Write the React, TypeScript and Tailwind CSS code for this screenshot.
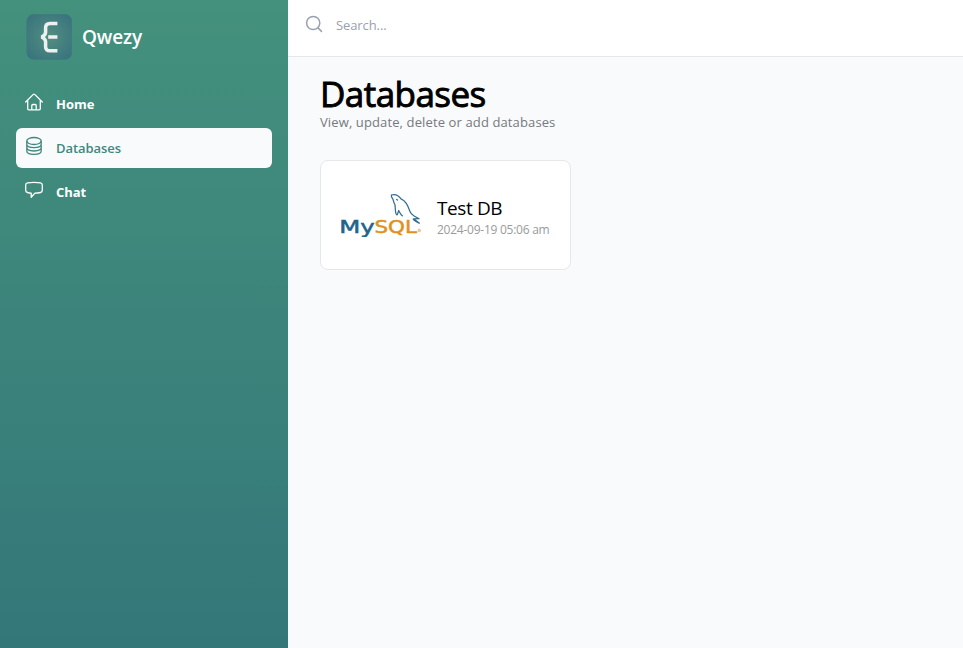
import React from "react";

function Logo() {
  return (
    <svg className="h-[46px] w-[46px] shrink-0" viewBox="0 0 46 46" fill="none">
      <defs>
        <radialGradient id="logo-fill" r=".62">
          <stop offset="0" stopColor="#528f80" />
          <stop offset="1" stopColor="#3a747e" />
        </radialGradient>
      </defs>
      <rect x=".9" y=".5" width="44.8" height="44.8" rx="6.5" fill="url(#logo-fill)" stroke="#3d7d7d" />
      <path d="M31.4 9.4h-7.4q-4.4 0-4.4 4.4v4.4q0 3-4 4.8 4 1.8 4 4.8v4.6q0 4.4 4.4 4.4h7.4M22.2 23h9.2" stroke="#eef0ef" strokeWidth="3.5" strokeLinejoin="bevel" />
    </svg>
  );
}

function HomeIcon() {
  return (
    <svg className="h-5 w-5" viewBox="0 0 20 20" fill="none" stroke="currentColor" strokeWidth="1.3" strokeLinecap="round" strokeLinejoin="round">
      <path d="M1.7 10 9.3 2.4q.7-.7 1.4 0l7.6 7.6M3.7 8.3v8.4q0 1.1 1.1 1.1h10.4q1.1 0 1.1-1.1V8.3M7.8 17.7v-4.2q0-1 1-1h2.4q1 0 1 1v4.2" />
    </svg>
  );
}

function DatabaseIcon() {
  return (
    <svg className="h-5 w-5" viewBox="0 0 20 20" fill="none" stroke="currentColor" strokeWidth="1.3">
      <ellipse cx="10" cy="5" rx="7.2" ry="3.5" />
      <path d="M2.8 5v9.9c0 4.5 14.4 4.5 14.4 0V5M2.8 8.3c0 4.5 14.4 4.5 14.4 0M2.8 11.6c0 4.5 14.4 4.5 14.4 0" />
    </svg>
  );
}

function ChatIcon() {
  return (
    <svg className="h-5 w-5" viewBox="0 0 20 20" fill="none" stroke="currentColor" strokeWidth="1.3" strokeLinejoin="round">
      <path d="M3.5 2.8Q10 1.8 16.5 2.8 18.3 3.2 18.3 5v5.3q0 1.9-1.8 2.2-2.7.5-5.6.6L7.2 17.2v-4.1q-1.9-.1-3.7-.6-1.8-.3-1.8-2.2V5q0-1.8 1.8-2.2Z" />
    </svg>
  );
}

function MySqlLogo() {
  return (
    <svg className="h-[44px] w-[82px] shrink-0" viewBox="0 0 82 44">
      <g fontFamily="DejaVu Sans, sans-serif" fontSize="18.2" strokeWidth=".5">
        <text x="-.8" y="40" textLength="35.5" lengthAdjust="spacingAndGlyphs" fill="#20638b" stroke="#20638b">My</text>
        <text x="34.4" y="40" textLength="42.5" lengthAdjust="spacingAndGlyphs" fill="#df921d" stroke="#df921d">SQL</text>
      </g>
      <circle cx="79.3" cy="37.5" r="1.2" fill="#f2d09c" stroke="#e9b469" strokeWidth=".9" />
      <path transform="translate(.5 .5)" d="M51 1.5c4-1.4 7.5 1 9.8 4.2 3.5 1.2 6.7 6.5 8.8 12.5.7 2 2 3 4 4.3l5 2.7-5.1.2 5.4 4.3c-3-1.5-6.2-2.5-6.2-4.4M51 1.5c-.6 2 .6 2.7 1.4 4.2.8 1.7.5 3 2 5.3.5 2 .1 5.8 1 8.8.6 2 1.6 2.5 2-.4l.8-2.4c1.1 1.6 1.4 3.6 3.6 5.3M56.2 5.9l.8.6" fill="none" stroke="#326d91" strokeWidth="1.25" strokeLinecap="round" strokeLinejoin="round" />
    </svg>
  );
}

const items = [
  { label: "Home", Icon: HomeIcon, active: false },
  { label: "Databases", Icon: DatabaseIcon, active: true },
  { label: "Chat", Icon: ChatIcon, active: false },
];

export default function App() {
  return (
    <div className="flex h-screen overflow-hidden bg-[#f9fafc] font-['Open_Sans','Noto_Sans',sans-serif]">
      <aside className="w-72 shrink-0 bg-linear-to-b from-[#44917d] to-[#347779] px-4 text-white">
        <div className="flex h-[74px] items-center gap-[10px] pl-[10px]">
          <Logo />
          <span className="text-[19px] leading-7 font-semibold tracking-[-0.1px]">Qwezy</span>
        </div>
        <nav className="mt-[10px] flex flex-col gap-1">
          {items.map(({ label, Icon, active }) => (
            <a key={label} className={`flex h-10 items-center gap-3 rounded-md px-2 text-[13px] ${active ? "bg-[#f9fafc] font-semibold text-[#40877c]" : "font-bold text-white"}`}>
              <span className="-mt-1"><Icon /></span>
              <span className={`pt-0.5 ${active ? "tracking-[-0.05px]" : "tracking-[-0.02px]"}`}>{label}</span>
            </a>
          ))}
        </nav>
      </aside>
      <div className="min-w-0 flex-1">
        <header className="flex h-[57px] items-start gap-3 border-b border-gray-200 bg-white pt-[14px] pl-4">
          <svg className="h-5 w-5 text-gray-400" viewBox="0 0 20 20" fill="none" stroke="currentColor" strokeWidth="1.5" strokeLinecap="round">
            <circle cx="9.2" cy="9" r="6.6" />
            <path d="m14 13.9 3.5 3.5" />
          </svg>
          <span className="pt-px text-[13px] leading-5 tracking-[-0.1px] text-gray-400">Search...</span>
        </header>
        <main className="px-8 pt-[19px]">
          <h1 className="text-[35px] leading-9 font-normal tracking-[-0.55px] text-black [-webkit-text-stroke:0.9px_black]">Databases</h1>
          <p className="text-[13px] leading-5 tracking-[0.12px] text-[#76797d]">View, update, delete or add databases</p>
          <div className="mt-[28px] flex h-[110px] w-[251px] items-center rounded-lg border border-gray-200 bg-white pl-[19px]">
            <MySqlLogo />
            <div className="ml-[15px] pt-1">
              <h2 className="text-[19px] leading-6 tracking-[-0.4px] whitespace-nowrap text-black">Test DB</h2>
              <p className="pt-px text-[12px] leading-[18px] tracking-[-0.25px] whitespace-nowrap text-[#999b9d]">2024-09-19 05:06 am</p>
            </div>
          </div>
        </main>
      </div>
    </div>
  );
}
